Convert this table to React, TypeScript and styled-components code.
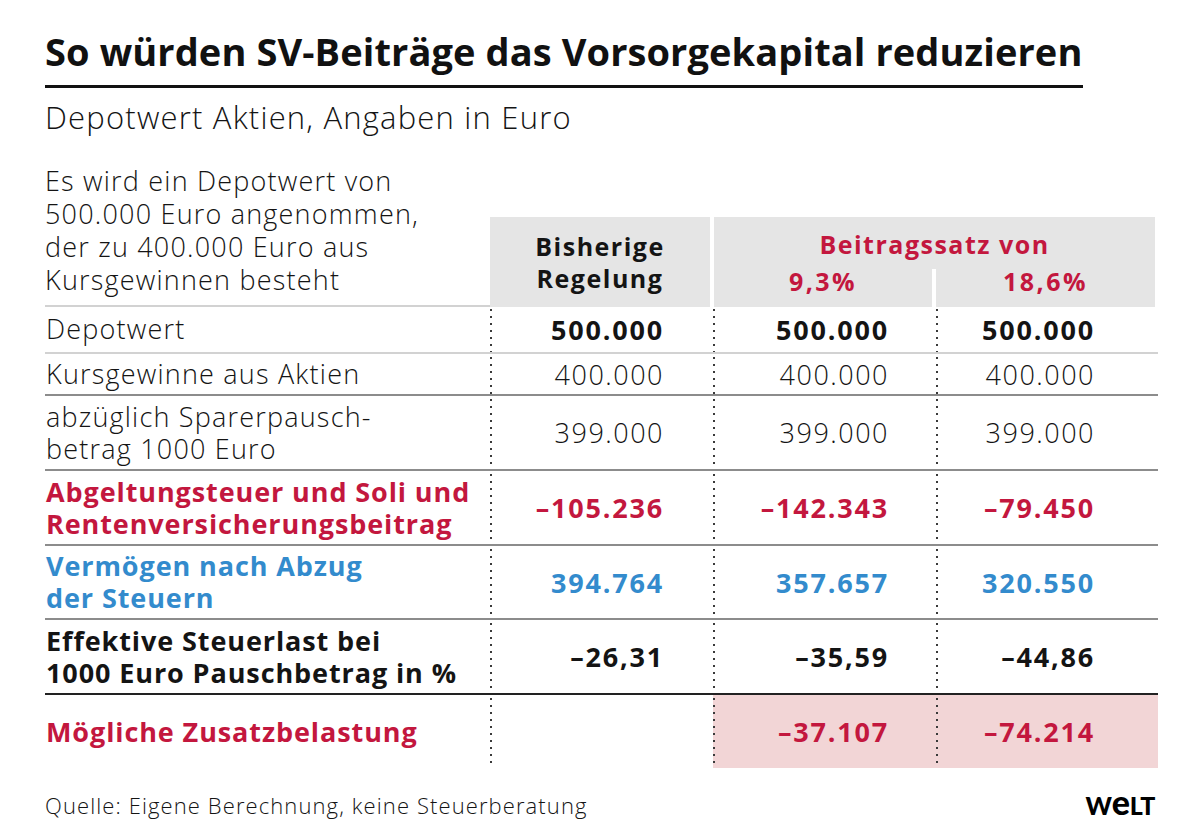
import * as React from 'react';
import styled, { createGlobalStyle } from 'styled-components';

const RED = '#c3173e';
const BLUE = '#338bcd';

const GlobalStyle = createGlobalStyle`
  html, body {
    margin: 0;
    background: #fff;
  }
  body {
    font-family: 'Open Sans', Lato, sans-serif;
    color: #141414;
  }
`;

const Page = styled.div`
  width: 1200px;
  height: 829px;
  box-sizing: border-box;
  padding: 29px 0 0 45px;
  overflow: hidden;
`;

const Title = styled.h1`
  margin: 0;
  width: 1038px;
  font-size: 38px;
  line-height: 44px;
  font-weight: 700;
  letter-spacing: 0.1px;
  color: #111;
  padding-bottom: 12px;
  border-bottom: 3px solid #111;
  white-space: nowrap;
`;

const Subtitle = styled.p`
  margin: 11px 0 0;
  font-size: 31px;
  line-height: 36px;
  font-weight: 300;
  letter-spacing: 1.2px;
`;

const Table = styled.div`
  margin-top: 29px;
  width: 1113px;
`;

const Row = styled.div<{ $h: number; $line?: string }>`
  display: grid;
  grid-template-columns: 445px 223px 223px 222px;
  height: ${({ $h }) => $h}px;
  box-sizing: border-box;
  border-bottom: ${({ $line }) => ($line ? `2px solid ${$line}` : 'none')};
`;

const HeadRow = styled.div`
  display: grid;
  grid-template-columns: 445px 223px 445px;
  height: 142px;
`;

const Intro = styled.div`
  font-size: 27px;
  line-height: 33px;
  font-weight: 300;
  letter-spacing: 1.2px;
  border-bottom: 2px solid #d2d2d2;
  box-sizing: border-box;
  padding-bottom: 9px;
`;

const HeadBox = styled.div`
  align-self: end;
  height: 90px;
  background: #e5e5e5;
  box-sizing: border-box;
  font-size: 25px;
  font-weight: 700;
  letter-spacing: 1.5px;
`;

const PlainHead = styled(HeadBox)`
  margin-right: 3px;
  display: flex;
  align-items: center;
  justify-content: center;
  text-align: center;
  line-height: 32px;
`;

const RateHead = styled(HeadBox)`
  margin: 0 3px 0 1px;
  color: ${RED};
  display: grid;
  grid-template-columns: 218px 1fr;
  grid-template-rows: 52px 38px;
`;

const RateTitle = styled.div`
  grid-column: 1 / span 2;
  text-align: center;
  line-height: 32px;
  padding-top: 11px;
`;

const RateCell = styled.div<{ $split?: boolean }>`
  text-align: center;
  line-height: 24px;
  letter-spacing: 2.5px;
  border-left: ${({ $split }) => ($split ? '4px solid #fff' : 'none')};
`;

const Label = styled.div<{ $tone?: 'red' | 'blue' | 'black' }>`
  display: flex;
  align-items: center;
  font-size: 27px;
  line-height: 32px;
  font-weight: ${({ $tone }) => ($tone ? 700 : 300)};
  letter-spacing: ${({ $tone }) => ($tone ? '0.9px' : '1.2px')};
  color: ${({ $tone }) => ($tone === 'red' ? RED : $tone === 'blue' ? BLUE : '#141414')};
  padding-left: 1px;
`;

const Value = styled.div<{ $pr: number; $bold?: boolean; $color?: string; $tint?: boolean }>`
  display: flex;
  align-items: center;
  justify-content: flex-end;
  padding-right: ${({ $pr }) => $pr}px;
  font-size: 27px;
  font-weight: ${({ $bold }) => ($bold ? 700 : 300)};
  letter-spacing: ${({ $bold }) => ($bold ? '1.8px' : '1.5px')};
  color: ${({ $color }) => $color || '#141414'};
  background-color: ${({ $tint }) => ($tint ? '#f2d5d6' : 'transparent')};
  background-image: linear-gradient(to bottom, #3a3a3a 2px, transparent 2px);
  background-size: 2px 7px;
  background-repeat: repeat-y;
  background-position: 0 3px;
`;

const Footer = styled.div`
  width: 1110px;
  margin-top: 22px;
  display: flex;
  justify-content: space-between;
  align-items: center;
`;

const Source = styled.span`
  font-size: 22px;
  font-weight: 300;
  letter-spacing: 1.1px;
`;

const Logo = styled.span`
  font-family: Lato, sans-serif;
  font-weight: 900;
  font-size: 25px;
  letter-spacing: -0.3px;
  color: #000;
  line-height: 1;
`;

const LogoE = styled.span`
  font-size: 34px;
  line-height: 0;
`;

type Tone = 'red' | 'blue' | 'black' | undefined;

type RowData = {
  label: React.ReactNode;
  values: string[];
  h: number;
  line?: string;
  tone?: Tone;
  bold?: boolean;
  tint?: boolean;
};

const rows: RowData[] = [
  { label: 'Depotwert', values: ['500.000', '500.000', '500.000'], h: 48, line: '#d2d2d2', bold: true },
  { label: 'Kursgewinne aus Aktien', values: ['400.000', '400.000', '400.000'], h: 42, line: '#8c8c8c' },
  {
    label: (
      <>
        abzüglich Sparerpausch-
        <br />
        betrag 1000 Euro
      </>
    ),
    values: ['399.000', '399.000', '399.000'],
    h: 75,
    line: '#8c8c8c',
  },
  {
    label: (
      <>
        Abgeltungsteuer und Soli und
        <br />
        Rentenversicherungsbeitrag
      </>
    ),
    values: ['–105.236', '–142.343', '–79.450'],
    h: 75,
    line: '#8c8c8c',
    tone: 'red',
    bold: true,
  },
  {
    label: (
      <>
        Vermögen nach Abzug
        <br />
        der Steuern
      </>
    ),
    values: ['394.764', '357.657', '320.550'],
    h: 74,
    line: '#8c8c8c',
    tone: 'blue',
    bold: true,
  },
  {
    label: (
      <>
        Effektive Steuerlast bei
        <br />
        1000 Euro Pauschbetrag in %
      </>
    ),
    values: ['–26,31', '–35,59', '–44,86'],
    h: 75,
    line: '#222',
    tone: 'black',
    bold: true,
  },
  {
    label: 'Mögliche Zusatzbelastung',
    values: ['', '–37.107', '–74.214'],
    h: 73,
    tone: 'red',
    bold: true,
    tint: true,
  },
];

const paddings = [49, 47, 63];

const toneColor = (tone: Tone) => (tone === 'red' ? RED : tone === 'blue' ? BLUE : undefined);

const App = () => {
  return (
    <Page>
      <GlobalStyle />
      <Title>So würden SV-Beiträge das Vorsorgekapital reduzieren</Title>
      <Subtitle>Depotwert Aktien, Angaben in Euro</Subtitle>
      <Table>
        <HeadRow>
          <Intro>
            Es wird ein Depotwert von
            <br />
            500.000 Euro angenommen,
            <br />
            der zu 400.000 Euro aus
            <br />
            Kursgewinnen besteht
          </Intro>
          <PlainHead>
            Bisherige
            <br />
            Regelung
          </PlainHead>
          <RateHead>
            <RateTitle>Beitragssatz von</RateTitle>
            <RateCell>9,3%</RateCell>
            <RateCell $split>18,6%</RateCell>
          </RateHead>
        </HeadRow>
        {rows.map((row, i) => (
          <Row key={i} $h={row.h} $line={row.line}>
            <Label $tone={row.tone}>
              <span>{row.label}</span>
            </Label>
            {row.values.map((v, j) => (
              <Value
                key={j}
                $pr={paddings[j]}
                $bold={row.bold}
                $color={toneColor(row.tone)}
                $tint={row.tint && j > 0}
              >
                {v}
              </Value>
            ))}
          </Row>
        ))}
      </Table>
      <Footer>
        <Source>Quelle: Eigene Berechnung, keine Steuerberatung</Source>
        <Logo>
          W<LogoE>e</LogoE>LT
        </Logo>
      </Footer>
    </Page>
  );
};

export default App;
